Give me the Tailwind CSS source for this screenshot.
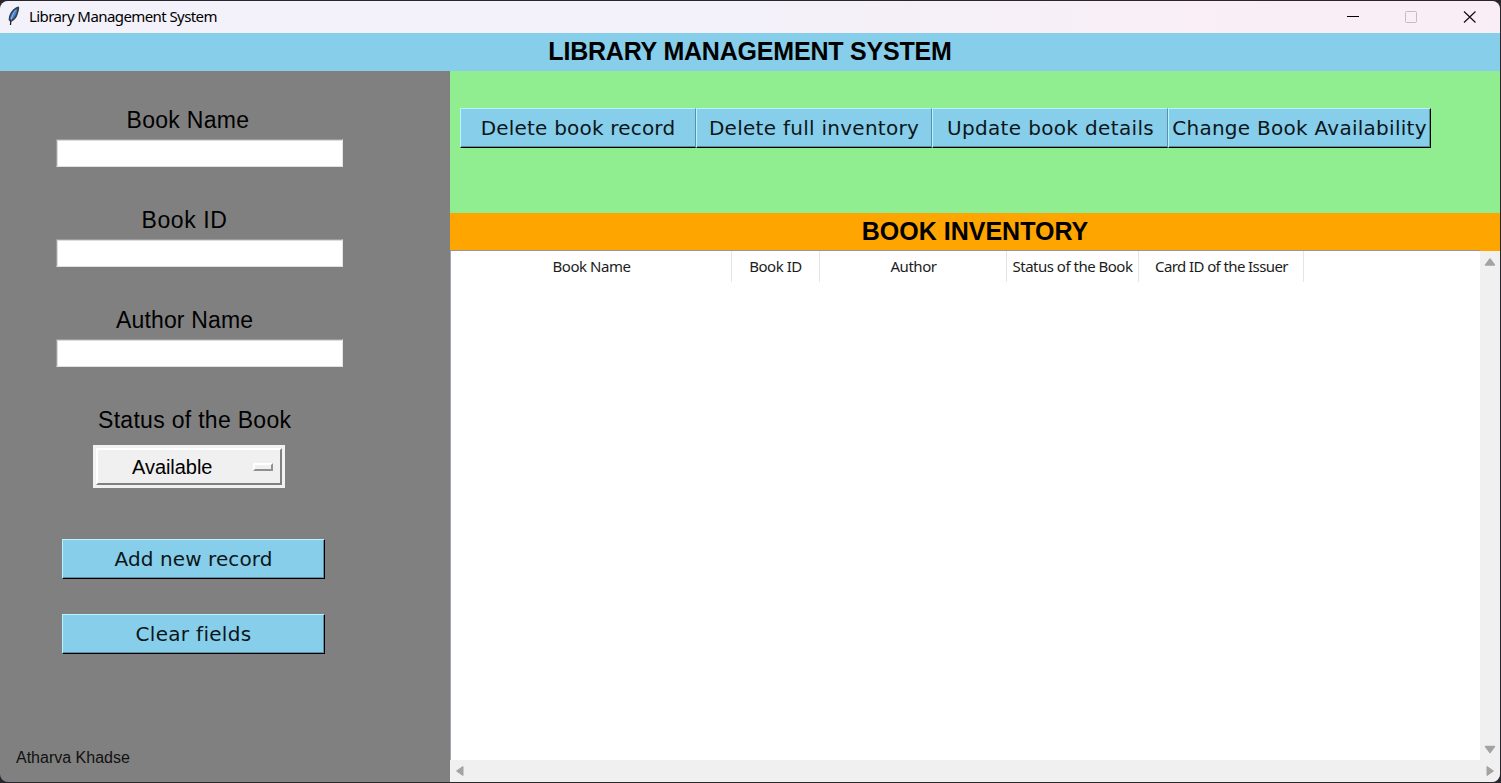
<!DOCTYPE html>
<html lang="en">
<head>
<meta charset="utf-8">
<title>Library Management System</title>
<script src="https://cdn.jsdelivr.net/npm/@tailwindcss/browser@4"></script>
</head>
<body class="bg-[#29262c] w-[1501px] h-[783px] overflow-hidden pt-px text-black">
<div class="w-[1500px] h-[781px] rounded-lg overflow-hidden flex flex-col bg-[#808080] font-['Liberation_Sans',sans-serif] whitespace-nowrap">
  <header class="h-8 shrink-0 flex items-center pl-[7px] bg-linear-to-r from-[#f3f1f9] from-50% to-[#faeef6] to-85%">
    <svg class="w-[14px] h-[20px] shrink-0 -mt-0.5" viewBox="0 0 14 20" fill="none">
      <path d="M12 .6C8.4 .8 4 4.5 2 10.5L1.6 14l1.9 2c4-1.4 6.4-4.6 7.4-8.3.9-2.5 1.6-5.2 1.1-7.1Z" fill="#35404c"/>
      <path d="M10.3 2.4C6.5 4.5 3.7 8.2 3 12.2l1.1 1.9c3-2 4.8-5 5.5-7.6.3-1.2.7-2.6.7-4.1Z" fill="#3f80d2"/>
      <path d="M8.6 4.4C6.3 7 4.8 11 3.8 15" stroke="#b4cbe2" stroke-width=".8"/>
      <path d="M3.9 13.5 3.5 19" stroke="#202225" stroke-width="1.3"/>
    </svg>
    <h1 class="ml-2 -mt-0.5 text-[15px] leading-5 font-['Noto_Sans',sans-serif] tracking-[-0.58px]">Library Management System</h1>
    <div class="ml-auto flex items-center">
      <svg class="w-[58px] h-8" viewBox="0 0 58 32" fill="none"><path d="M24 15.5h12" stroke="#000"/></svg>
      <svg class="w-[58px] h-8" viewBox="0 0 58 32" fill="none"><rect x="24.5" y="10.5" width="11" height="11" rx="1" stroke="#c3bcc4"/></svg>
      <svg class="w-[61px] h-8" viewBox="0 0 61 32" fill="none"><path d="M25 10.5 36.5 21.5M36.5 10.5 25 21.5" stroke="#111" stroke-width="1.2"/></svg>
    </div>
  </header>
  <h2 class="h-[38px] shrink-0 bg-[#87ceeb] text-center text-[25px] leading-[37px] font-bold tracking-[-0.2px]">LIBRARY MANAGEMENT SYSTEM</h2>
  <main class="flex-1 flex min-h-0">
    <aside class="w-[450px] shrink-0 flex flex-col pt-[34px] text-[23px] leading-[30px]">
      <label class="ml-[126.5px] tracking-[0.3px]">Book Name</label>
      <input class="ml-[56px] mt-1 w-[287px] h-7 bg-white border border-t-[#9c9c9c] border-l-[#9c9c9c] border-r-[#e4e4e4] border-b-[#e0e0e0] shadow-[inset_1px_1px_#dcdcdc]">
      <label class="ml-[141.5px] mt-[38px] tracking-[0.6px]">Book ID</label>
      <input class="ml-[56px] mt-1 w-[287px] h-7 bg-white border border-t-[#9c9c9c] border-l-[#9c9c9c] border-r-[#e4e4e4] border-b-[#e0e0e0] shadow-[inset_1px_1px_#dcdcdc]">
      <label class="ml-[116px] mt-[38px] tracking-[0.15px]">Author Name</label>
      <input class="ml-[56px] mt-1 w-[287px] h-7 bg-white border border-t-[#9c9c9c] border-l-[#9c9c9c] border-r-[#e4e4e4] border-b-[#e0e0e0] shadow-[inset_1px_1px_#dcdcdc]">
      <label class="ml-[98px] mt-[38px] tracking-[0.3px]">Status of the Book</label>
      <button class="ml-[93px] mt-[10px] w-[192px] h-[43px] bg-[#f0f0f0] border-2 border-[#f2f2f2] p-px">
        <span class="h-full flex items-center border-2 border-t-white border-l-white border-r-[#808080] border-b-[#808080] pl-[34px] pr-[7px]">
          <span class="text-[20px] leading-6 tracking-[-0.05px]">Available</span>
          <span class="ml-auto w-5 h-2 border-2 border-t-white border-l-white border-r-[#909090] border-b-[#909090]"></span>
        </span>
      </button>
      <button class="ml-[62px] mt-[51px] w-[263px] h-10 bg-[#87ceeb] border border-t-[#b4f5ff] border-l-[#b4f5ff] border-r-black border-b-black shadow-[inset_-1px_-1px_#5c8fa3] text-[20px] font-['DejaVu_Sans',sans-serif] leading-[38px] tracking-[0.1px] text-[#0c161a]">Add new record</button>
      <button class="ml-[62px] mt-[35px] w-[263px] h-10 bg-[#87ceeb] border border-t-[#b4f5ff] border-l-[#b4f5ff] border-r-black border-b-black shadow-[inset_-1px_-1px_#5c8fa3] text-[20px] font-['DejaVu_Sans',sans-serif] leading-[38px] tracking-[0.3px] text-[#0c161a]">Clear fields</button>
      <p class="ml-4 mt-[94px] text-[16px] leading-5 text-[#111]">Atharva Khadse</p>
    </aside>
    <section class="w-[1050px] flex flex-col">
      <div class="h-[142px] shrink-0 bg-[#90ee90] pl-[10px] pt-[37px] flex items-start font-['DejaVu_Sans',sans-serif] text-[20px] leading-[38px] tracking-[0.27px] text-[#0c161a]">
        <button class="w-[236px] h-10 bg-[#87ceeb] border border-t-[#b4f5ff] border-l-[#b4f5ff] border-r-[#5c8fa3] border-b-black shadow-[inset_0_-1px_#5c8fa3] tracking-[0.2px]">Delete book record</button>
        <button class="w-[236px] h-10 bg-[#87ceeb] border border-t-[#b4f5ff] border-l-[#b4f5ff] border-r-[#5c8fa3] border-b-black shadow-[inset_0_-1px_#5c8fa3]">Delete full inventory</button>
        <button class="w-[236px] h-10 bg-[#87ceeb] border border-t-[#b4f5ff] border-l-[#b4f5ff] border-r-[#5c8fa3] border-b-black shadow-[inset_0_-1px_#5c8fa3] pl-px tracking-[0.35px]">Update book details</button>
        <button class="w-[263px] h-10 bg-[#87ceeb] border border-t-[#b4f5ff] border-l-[#b4f5ff] border-r-black border-b-black shadow-[inset_-1px_-1px_#5c8fa3]">Change Book Availability</button>
      </div>
      <h2 class="h-[38px] shrink-0 bg-[#ffa500] text-center text-[25px] leading-[37px] font-bold">BOOK INVENTORY</h2>
      <div class="flex-1 flex min-h-0">
        <div class="w-[1030px] bg-white border-l border-l-[#a0a8b4] shadow-[0_-1px_#98949a]">
          <div class="h-[31px] flex text-center text-[15px] leading-[31px] font-['Noto_Sans',sans-serif] tracking-[-0.45px] text-[#1c1c1c]">
            <span class="w-[281px] border-r border-[#e5e5e5] pl-px">Book Name</span>
            <span class="w-[88px] border-r border-[#e5e5e5]">Book ID</span>
            <span class="w-[187px] border-r border-[#e5e5e5] pl-px">Author</span>
            <span class="w-[132px] border-r border-[#e5e5e5] tracking-[-0.5px]">Status of the Book</span>
            <span class="w-[165px] border-r border-[#e5e5e5] pl-px tracking-[-0.6px]">Card ID of the Issuer</span>
          </div>
        </div>
        <div class="w-5 bg-[#f0f0f0] flex flex-col justify-between items-center py-[6px]">
          <svg class="w-[12px] h-[10px]" viewBox="0 0 12 10"><path d="M6 2 10.5 8h-9Z" fill="#a3a3a3" stroke="#a3a3a3" stroke-width="1.4" stroke-linejoin="round"/></svg>
          <svg class="w-[12px] h-[10px]" viewBox="0 0 12 10"><path d="M6 8.5 10.5 2.5h-9Z" fill="#a3a3a3" stroke="#a3a3a3" stroke-width="1.4" stroke-linejoin="round"/></svg>
        </div>
      </div>
      <div class="h-[22px] shrink-0 bg-[#f0f0f0] flex items-center justify-between px-[5px]">
        <svg class="w-[10px] h-[12px]" viewBox="0 0 10 12"><path d="M1.5 6 8 1.5v9Z" fill="#a3a3a3" stroke="#a3a3a3" stroke-linejoin="round"/></svg>
        <svg class="w-[10px] h-[12px]" viewBox="0 0 10 12"><path d="M8.5 6 2 1.5v9Z" fill="#a3a3a3" stroke="#a3a3a3" stroke-linejoin="round"/></svg>
      </div>
    </section>
  </main>
</div>
</body>
</html>
